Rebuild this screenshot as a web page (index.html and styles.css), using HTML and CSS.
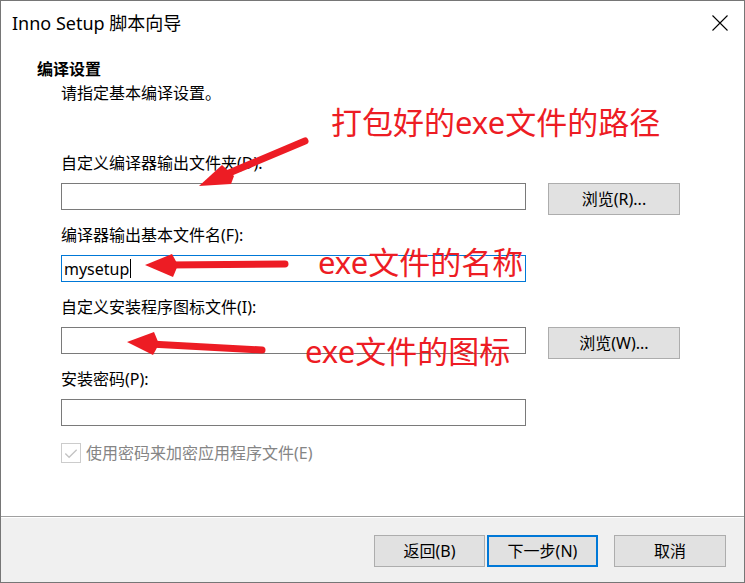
FILE: index.html
```html
<!DOCTYPE html>
<html lang="zh-CN">
<head>
<meta charset="utf-8">
<title>Inno Setup 脚本向导</title>
<link rel="stylesheet" href="styles.css">
</head>
<body>
<div class="window">
  <div class="titlebar">
    <span class="title">Inno Setup 脚本向导</span>
    <svg class="close" viewBox="0 0 16 16" width="16" height="16"><path d="M0.5 0.5 L15.5 15.5 M15.5 0.5 L0.5 15.5" stroke="#000" stroke-width="1.1" fill="none"/></svg>
  </div>
  <div class="content">
    <div class="heading">编译设置</div>
    <div class="subheading">请指定基本编译设置。</div>
    <div class="form">
      <div class="field">
        <div class="label">自定义编译器输出文件夹(D):</div>
        <div class="row"><div class="input"></div><div class="btn browse">浏览(R)...</div></div>
      </div>
      <div class="field">
        <div class="label">编译器输出基本文件名(F):</div>
        <div class="row"><div class="input focused"><span class="value">mysetup</span><span class="caret"></span></div></div>
      </div>
      <div class="field">
        <div class="label">自定义安装程序图标文件(I):</div>
        <div class="row"><div class="input"></div><div class="btn browse">浏览(W)...</div></div>
      </div>
      <div class="field">
        <div class="label">安装密码(P):</div>
        <div class="row"><div class="input"></div></div>
      </div>
      <div class="check-row">
        <span class="checkbox"><svg viewBox="0 0 19 19" width="19" height="19"><path d="M3.5 9.5 L7.5 13.5 L15.5 5.5" stroke="#c4c4c4" stroke-width="1.4" fill="none"/></svg></span>
        <span class="check-label">使用密码来加密应用程序文件(E)</span>
      </div>
    </div>
  </div>
  <div class="footer">
    <div class="btn nav">返回(B)</div>
    <div class="btn nav primary">下一步(N)</div>
    <div class="btn nav cancel">取消</div>
  </div>
</div>
<div class="overlay">
  <svg class="arrows" width="745" height="583" viewBox="0 0 745 583">
    <g stroke="#ed1c24" stroke-width="7" stroke-linecap="round" fill="none">
      <path d="M305 141 L222 176"/>
      <path d="M285 264 L168 265"/>
      <path d="M262 350 L150 344"/>
    </g>
    <g fill="#ed1c24">
      <polygon points="199,186 222,165 234,176 231,184"/>
      <polygon points="145,265 172,254 178,265 173,277"/>
      <polygon points="127,342 154,332 159,344 153,355"/>
    </g>
  </svg>
  <div class="note n1">打包好的exe文件的路径</div>
  <div class="note n2">exe文件的名称</div>
  <div class="note n3">exe文件的图标</div>
</div>
</body>
</html>
```
FILE: styles.css
```css
* { box-sizing: border-box; }
html, body { margin: 0; padding: 0; background: #fff; }
body {
  font-family: "Noto Sans", "Noto Sans CJK SC", sans-serif;
  font-size: 16px;
  color: #000;
  width: 745px;
  height: 583px;
  position: relative;
  overflow: hidden;
}
.window {
  width: 745px;
  height: 583px;
  border: 1px solid #767676;
  display: flex;
  flex-direction: column;
  background: #fff;
}
.titlebar {
  height: 40px;
  flex: none;
  display: flex;
  align-items: center;
  justify-content: space-between;
  padding: 0 16px 0 11px;
}
.title { font-size: 18px; line-height: 24px; margin-top: 3px; }
.close { width: 16px; height: 16px; margin-top: 3px; }
.content {
  flex: 1;
  padding: 18px 0 0 36px;
}
.heading { font-weight: bold; line-height: 20px; }
.subheading { line-height: 20px; margin: 4px 0 0 24px; }
.form {
  margin: 50px 0 0 24px;
  display: flex;
  flex-direction: column;
  gap: 15px;
}
.label { line-height: 20px; margin-bottom: 10px; white-space: nowrap; }
.row {
  display: flex;
  align-items: flex-start;
  gap: 22px;
  height: 27px;
}
.input {
  width: 465px;
  height: 27px;
  border: 1px solid #7a7a7a;
  background: #fff;
  display: flex;
  align-items: center;
  padding-left: 2px;
}
.input.focused { border-color: #0078d7; }
.value { line-height: 20px; }
.caret { width: 1px; height: 19px; background: #000; margin-left: 1px; }
.btn {
  display: flex;
  align-items: center;
  justify-content: center;
  background: #e1e1e1;
  border: 1px solid #adadad;
  line-height: 20px;
  white-space: nowrap;
}
.browse { width: 132px; height: 32px; flex: none; }
.check-row {
  display: flex;
  align-items: center;
  gap: 5px;
  margin-top: 2px;
  color: #858585;
}
.checkbox {
  width: 20px;
  height: 20px;
  border: 1px solid #cccccc;
  display: flex;
  align-items: center;
  justify-content: center;
}
.checkbox svg { display: block; }
.check-label { line-height: 20px; }
.footer {
  height: 66px;
  flex: none;
  border-top: 1px solid #a0a0a0;
  background: #f0f0f0;
  box-shadow: inset 0 1px #ffffff;
  display: flex;
  justify-content: flex-end;
  align-items: flex-start;
  padding: 18px 18px 0 0;
}
.nav { width: 111px; height: 32px; }
.primary { border: 2px solid #0078d7; margin-left: 2px; }
.cancel { width: 112px; margin-left: 16px; }
.overlay {
  position: absolute;
  left: 0;
  top: 0;
  width: 745px;
  height: 583px;
  pointer-events: none;
}
.arrows { position: absolute; left: 0; top: 0; }
.note {
  position: absolute;
  color: #ed1c24;
  font-size: 31px;
  line-height: 31px;
  white-space: nowrap;
}
.n1 { left: 331px; top: 107px; }
.n2 { left: 318px; top: 247px; }
.n3 { left: 305px; top: 336px; }
```
